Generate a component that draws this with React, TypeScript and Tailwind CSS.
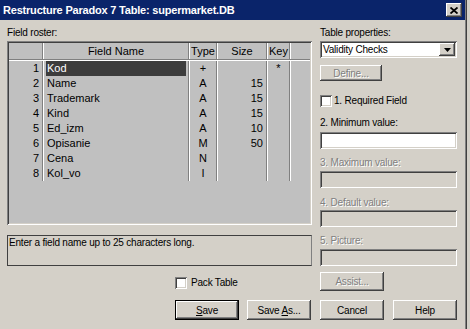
import type { ReactNode } from "react";

const sunken =
  "shadow-[inset_1px_1px_0_#808080,inset_-1px_-1px_0_#ffffff,inset_2px_2px_0_#404040,inset_-2px_-2px_0_#d4d0c8]";
const raised =
  "shadow-[inset_-1px_-1px_0_#404040,inset_1px_1px_0_#ffffff,inset_-2px_-2px_0_#808080,inset_2px_2px_0_#d4d0c8]";
const dim = "text-[#808080] [text-shadow:1px_1px_0_#ffffff]";

const rows = [
  { n: 1, name: "Kod", type: "+", size: "", key: "*" },
  { n: 2, name: "Name", type: "A", size: "15", key: "" },
  { n: 3, name: "Trademark", type: "A", size: "15", key: "" },
  { n: 4, name: "Kind", type: "A", size: "15", key: "" },
  { n: 5, name: "Ed_izm", type: "A", size: "10", key: "" },
  { n: 6, name: "Opisanie", type: "M", size: "50", key: "" },
  { n: 7, name: "Cena", type: "N", size: "", key: "" },
  { n: 8, name: "Kol_vo", type: "I", size: "", key: "" },
];

const Btn = ({
  children,
  w = "w-[64px]",
  h = "h-[20px]",
  disabled = false,
  isDefault = false,
}: {
  children: ReactNode;
  w?: string;
  h?: string;
  disabled?: boolean;
  isDefault?: boolean;
}) => (
  <div
    className={`${w} ${h} bg-[#d4d0c8] flex items-center justify-center text-[10px] tracking-[-0.2px] ${
      isDefault ? "border border-black" : ""
    }`}
  >
    <div className={`w-full h-full flex items-center justify-center ${raised} ${disabled ? dim : "text-black"}`}>
      {children}
    </div>
  </div>
);

const Label = ({ children, disabled = false, className = "" }: { children: ReactNode; disabled?: boolean; className?: string }) => (
  <div className={`h-[12px] leading-[12px] text-[10px] tracking-[-0.2px] ${disabled ? dim : "text-black"} ${className}`}>
    {children}
  </div>
);

const Field = ({ enabled = false, className = "" }: { enabled?: boolean; className?: string }) => (
  <div className={`w-[137px] h-[17px] ${sunken} ${enabled ? "bg-white" : "bg-[#d4d0c8]"} ${className}`} />
);

const Check = () => <div className={`w-[12px] h-[12px] bg-white ${sunken}`} />;

export default function App() {
  return (
    <div className="w-[470px] h-[329px] bg-[#d4d0c8] flex overflow-hidden font-['Liberation_Sans',Arial,sans-serif]">
      <div className="w-[465px] flex flex-col">
        {/* title bar */}
        <div className="h-[20px] bg-[#0a246a] flex items-center justify-between pl-[3px] pr-[3px]">
          <span className="text-white font-bold text-[11px] tracking-[-0.2px]">
            Restructure Paradox 7 Table: supermarket.DB
          </span>
          <div className={`w-[16px] h-[14px] bg-[#d4d0c8] flex items-center justify-center ${raised}`}>
            <svg width="8" height="7" viewBox="0 0 8 7">
              <path d="M0.5 0.5 L7.5 6.5 M7.5 0.5 L0.5 6.5" stroke="black" strokeWidth="1.8" />
            </svg>
          </div>
        </div>

        <div className="flex pl-[7px] gap-[8px]">
          {/* left side */}
          <div className="w-[305px] flex flex-col">
            <Label className="mt-[7px]">Field roster:</Label>
            <div className={`mt-[2px] h-[184px] p-[2px] ${sunken}`}>
              <div className="h-full bg-[#c0c0c0] text-[11px] text-black">
                <div className="flex h-[17px] leading-[16px] border-b border-b-[#808080]">
                  <div className="w-[34px] border-r border-r-[#808080]" />
                  <div className="w-[146px] border-l border-l-white border-r border-r-[#808080] text-center">Field Name</div>
                  <div className="w-[28px] border-l border-l-white border-r border-r-[#808080] text-center">Type</div>
                  <div className="w-[50px] border-l border-l-white border-r border-r-[#808080] text-center">Size</div>
                  <div className="w-[23px] border-l border-l-white border-r border-r-[#808080] text-center">Key</div>
                  <div className="flex-1 border-l border-l-white" />
                </div>
                <div className="h-[1px] bg-white" />
                {rows.map((r) => (
                  <div key={r.n} className="flex h-[15px] leading-[15px]">
                    <div className="w-[34px] border-r border-r-[#808080] text-right pr-[3px]">{r.n}</div>
                    <div className="w-[146px] border-l border-l-white border-r border-r-[#808080] px-[2px]">
                      {r.n === 1 ? (
                        <div className="bg-[#3c3c3c] text-white pl-[1px] h-full">{r.name}</div>
                      ) : (
                        <div className="pl-[1px]">{r.name}</div>
                      )}
                    </div>
                    <div className="w-[28px] border-l border-l-white border-r border-r-[#808080] text-center">{r.type}</div>
                    <div className="w-[50px] border-l border-l-white border-r border-r-[#808080] text-right pr-[3px]">{r.size}</div>
                    <div className="w-[23px] border-l border-l-white border-r border-r-[#808080] text-center">{r.key}</div>
                    <div className="flex-1 border-l border-l-white" />
                  </div>
                ))}
              </div>
            </div>
            <div className="mt-[10px] h-[31px] border border-[#404040] border-r-[#808080] pl-[1px] pt-[1px]">
              <Label>Enter a field name up to 25 characters long.</Label>
            </div>
            <div className="mt-[11px] ml-[168px] flex items-center gap-[4px]">
              <Check />
              <Label>Pack Table</Label>
            </div>
            <div className="mt-[11px] ml-[168px] flex gap-[8px]">
              <Btn isDefault>
                <span>
                  <u>S</u>ave
                </span>
              </Btn>
              <Btn>
                <span>
                  Save <u>A</u>s...
                </span>
              </Btn>
            </div>
          </div>

          {/* right side */}
          <div className="w-[137px] flex flex-col">
            <Label className="mt-[7px]">Table properties:</Label>
            <div className={`mt-[2px] h-[17px] bg-white p-[2px] flex ${sunken}`}>
              <div className="flex-1 text-[10px] tracking-[-0.2px] leading-[13px] pl-[1px]">Validity Checks</div>
              <div className={`w-[16px] h-[13px] bg-[#d4d0c8] flex items-center justify-center ${raised}`}>
                <svg width="7" height="4" viewBox="0 0 7 4">
                  <path d="M0 0 H7 L3.5 4 Z" fill="black" />
                </svg>
              </div>
            </div>
            <div className="mt-[7px]">
              <Btn w="w-[62px]" h="h-[16px]" disabled>
                Define...
              </Btn>
            </div>
            <div className="mt-[14px] flex items-center gap-[2px]">
              <Check />
              <Label>1. Required Field</Label>
            </div>
            <Label className="mt-[10px]">2. Minimum value:</Label>
            <Field enabled className="mt-[3px]" />
            <Label disabled className="mt-[8px]">
              3. Maximum value:
            </Label>
            <Field className="mt-[2px]" />
            <Label disabled className="mt-[9px]">
              4. Default value:
            </Label>
            <Field className="mt-[1px]" />
            <Label disabled className="mt-[8px]">
              5. Picture:
            </Label>
            <Field className="mt-[2px]" />
            <div className="mt-[6px]">
              <Btn h="h-[19px]" disabled>
                Assist...
              </Btn>
            </div>
            <div className="mt-[9px] flex gap-[9px]">
              <Btn>Cancel</Btn>
              <Btn>Help</Btn>
            </div>
          </div>
        </div>
      </div>
      <div className="w-[1px] bg-[#808080]" />
      <div className="w-[1px] bg-[#404040]" />
    </div>
  );
}
